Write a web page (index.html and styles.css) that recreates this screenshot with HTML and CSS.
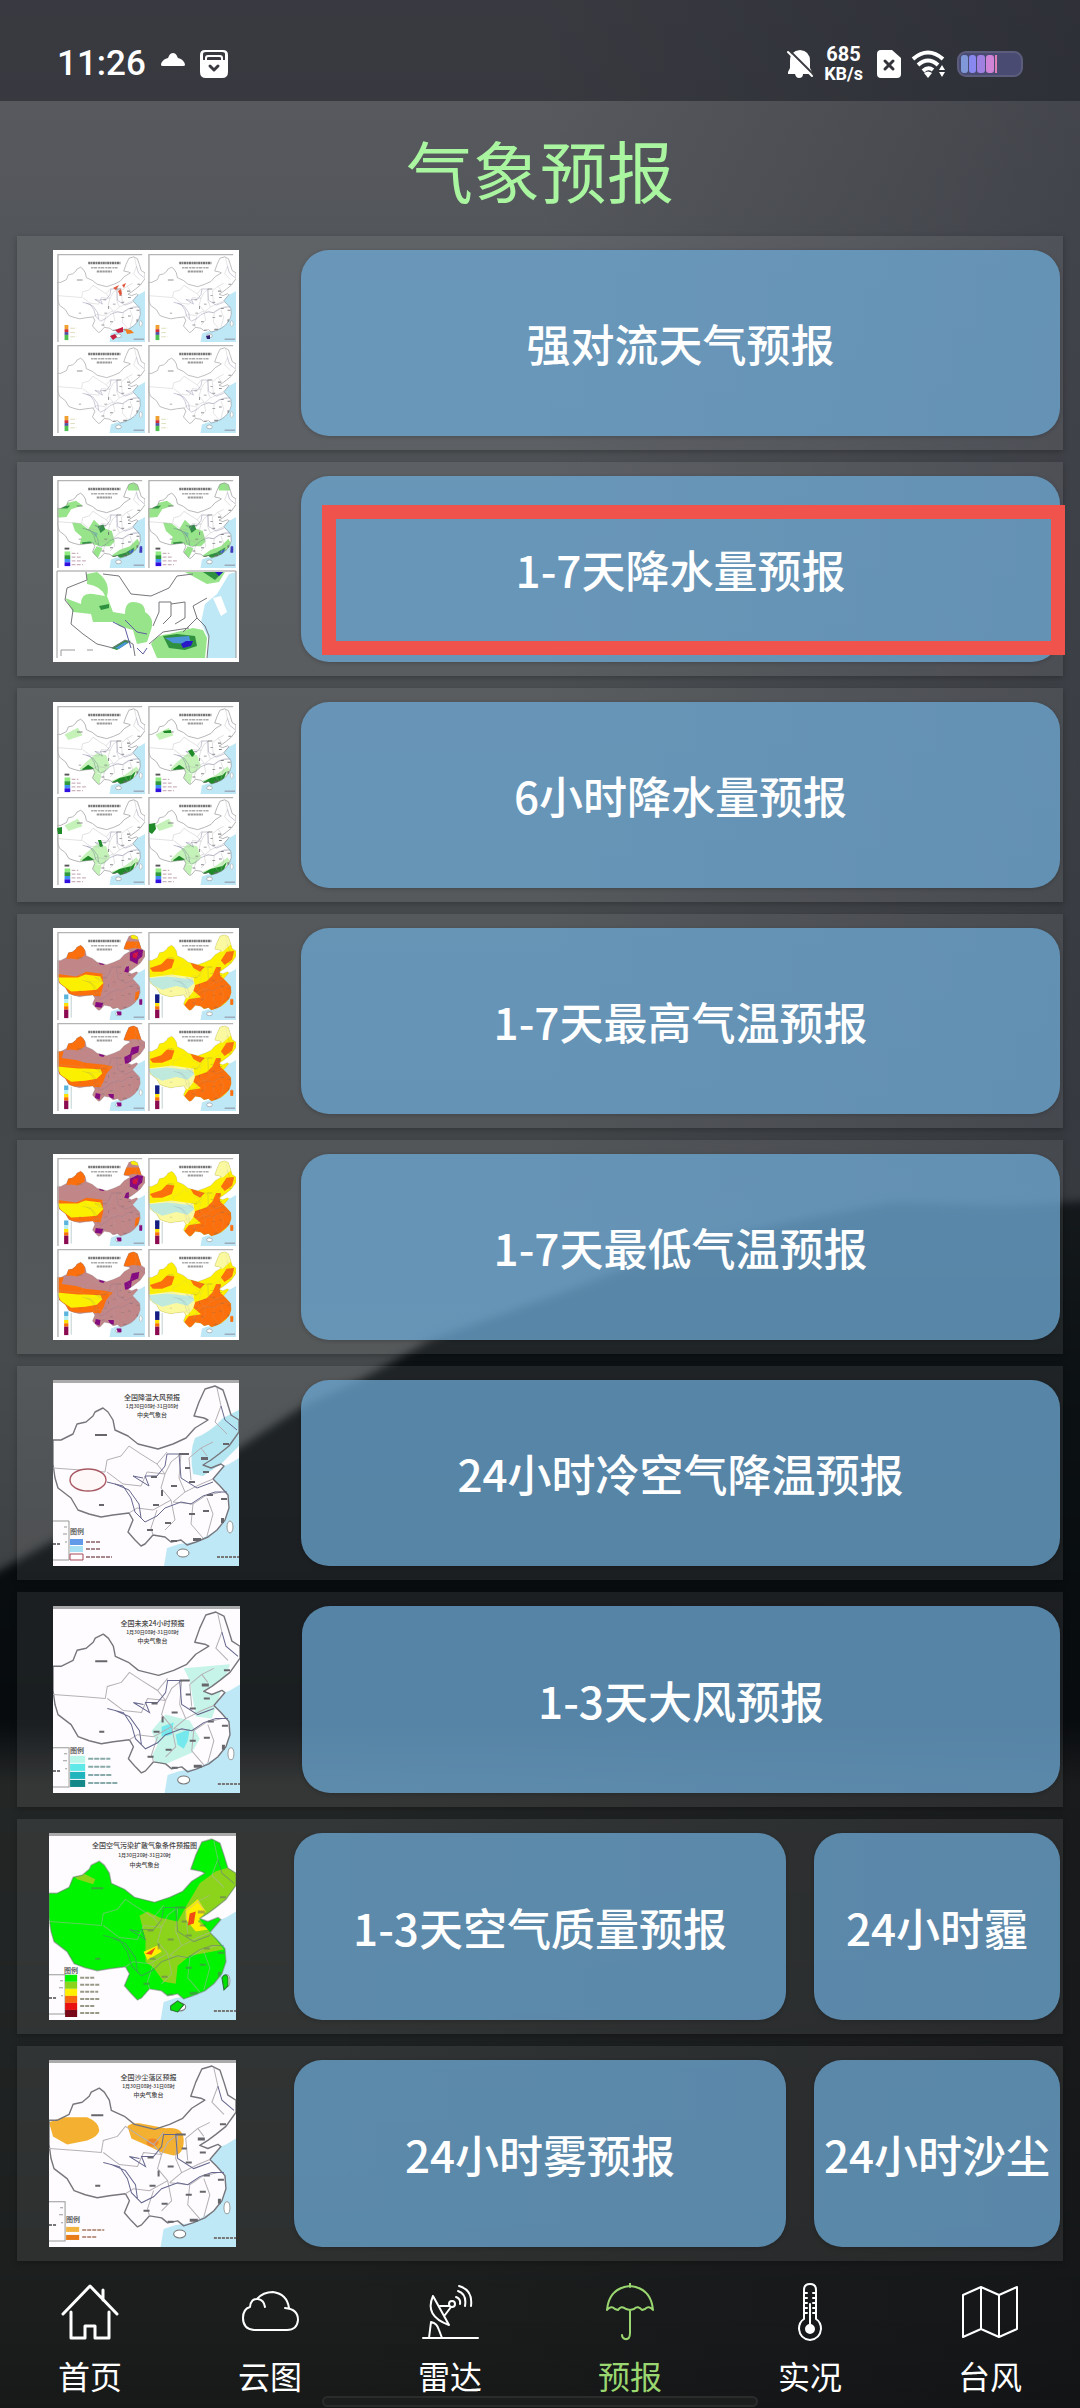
FILE: index.html
```html
<!DOCTYPE html>
<html lang="zh-CN">
<head>
    <meta charset="UTF-8">
    <meta name="viewport" content="width=device-width, initial-scale=1.0">
    <title>气象预报</title>
    <link rel="stylesheet" href="styles.css">
</head>
<body>
    <!-- mountain backdrop -->
    <svg class="backdrop" viewBox="0 0 1080 2408" preserveAspectRatio="none" aria-hidden="true">
        <defs>
            <linearGradient id="sky" x1="0" y1="0" x2="0" y2="1">
                <stop offset="0" stop-color="#5a5b60"/>
                <stop offset="0.1" stop-color="#53565a"/>
                <stop offset="0.3" stop-color="#4b4f52"/>
                <stop offset="0.46" stop-color="#43474a"/>
                <stop offset="0.56" stop-color="#484b4d"/>
                <stop offset="0.66" stop-color="#3e4143"/>
            </linearGradient>
            <linearGradient id="shade" x1="0" y1="0" x2="1" y2="0">
                <stop offset="0.5" stop-color="#1a1c28" stop-opacity="0"/>
                <stop offset="1" stop-color="#1a1c28" stop-opacity="0.32"/>
            </linearGradient>
            <linearGradient id="hill" x1="0" y1="0" x2="0" y2="1">
                <stop offset="0" stop-color="#15191c"/>
                <stop offset="0.15" stop-color="#0c1113"/>
                <stop offset="0.42" stop-color="#070b0e"/>
                <stop offset="0.47" stop-color="#242626"/>
                <stop offset="0.6" stop-color="#222525"/>
                <stop offset="0.9" stop-color="#1c1e1e"/>
                <stop offset="1" stop-color="#161818"/>
            </linearGradient>
            <linearGradient id="hill-shade" x1="0" y1="0" x2="1" y2="0">
                <stop offset="0.3" stop-color="#0b0d10" stop-opacity="0"/>
                <stop offset="1" stop-color="#0b0d10" stop-opacity="0.45"/>
            </linearGradient>
            <filter id="soft" color-interpolation-filters="sRGB"><feGaussianBlur stdDeviation="4"/></filter>
        </defs>
        <rect width="1080" height="2408" fill="url(#sky)"/>
        <rect width="1080" height="1400" fill="url(#shade)"/>
        <path fill="url(#hill)" filter="url(#soft)" d="M-20 1580 L0 1570 L53 1541 L150 1494 L239 1448 L300 1408 L360 1380 L430 1340 L572 1289 L689 1243 L790 1222 L895 1202 L1000 1206 L1100 1200 V2440 H-20 Z"/>
        <rect y="1600" width="1080" height="808" fill="url(#hill-shade)"/>
    </svg>

    <!-- shared map pieces -->
    <svg class="defs" width="0" height="0" aria-hidden="true">
        <defs>
            <path id="land" d="M0 60 L8 60 L20 54 L24 44 L33 42 L40 36 L42 32 L50 28 L55 32 L60 40 L62 50 L75 56 L85 64 L105 69 L120 64 L133 58 L142 48 L155 40 L151 38 L141 36 L146 22 L152 9 L162 6 L170 10 L174 22 L178 35 L186 40 V52 L176 66 L166 74 L158 80 L150 85 L158 88 L168 84 L171 86 L160 99 L167 106 L175 115 L176 128 L172 140 L164 150 L155 157 L143 162 L134 165 L128 160 L118 162 L112 157 L100 155 L92 164 L88 166 L82 160 L75 152 L80 140 L76 133 L60 135 L48 137 L36 134 L25 130 L18 118 L5 108 L2 98 L0 84 Z"/>
            <clipPath id="land-clip"><use href="#land"/></clipPath>
            <symbol id="sea" viewBox="0 0 186 186">
                <path fill="#bfe8f7" d="M186 78 L176 84 L171 86 L160 99 L167 106 L175 115 L176 128 L172 140 L164 150 L143 162 L126 164 L114 168 L111 186 H186 Z"/>
                <ellipse cx="130" cy="173" rx="6" ry="4" fill="#fff" stroke="#777"/>
                <ellipse cx="177" cy="147" rx="3" ry="6" fill="#fff" stroke="#999"/>
            </symbol>
            <symbol id="lines" viewBox="0 0 186 186">
                <use href="#land" fill="none" stroke="#76767c" stroke-width="1.4" stroke-linejoin="round"/>
                <g fill="none" stroke="#b5b0b5" stroke-width="1">
                    <path d="M0 88 L28 90 L52 92 L54 80 L68 76 L76 66 L88 74 L104 84 L112 94 M54 92 L70 104 L88 106 L94 92 L112 94 L118 82 L128 74 M128 74 L126 98 L132 112 L120 122 M112 94 L108 108 L118 120 L100 130 L84 128 L76 133 M120 122 L140 124 L152 116 L168 112 M104 130 L98 148 L100 155 M118 120 L122 140 L112 150 M140 124 L138 144 L150 158 M154 118 L160 134 L154 156 M132 112 L148 104 L160 99 M138 100 L136 78 L148 68 L160 62 M148 68 L154 76 M164 8 L168 26 L162 42 L174 54 M104 84 L114 72"/>
                </g>
                <g fill="none" stroke="#66688f" stroke-width="1">
                    <path d="M54 102 L70 106 L78 118 L82 132 L92 142 L104 136 L112 128 L128 122 L138 124 L150 116 L162 112 L174 112 M62 104 L76 110 L86 124 L88 138 M90 98 L80 96 L96 106 L92 96 L104 96 L112 86 L114 74 L126 74 L128 98 L144 108 L160 102 M168 26 L172 40 L184 50"/>
                </g>
                <g fill="#66666c">
                    <path d="M42 54h12v2h-12z M46 124h5v2h-5z M98 96h6v2h-6z M118 105h6v2h-6z M132 87h5v2h-5z M150 91h6v2h-6z M136 101h6v2h-6z M100 124h6v2h-6z M112 142h6v2h-6z M94 149h6v2h-6z M118 160h6v2h-6z M136 133h6v2h-6z M150 130h6v2h-6z M140 158h8v3h-8z M168 118h6v2h-6z M168 138h3v5h-3z M170 63h6v2h-6z M148 77h7v3h-7z M126 73h10v2h-10z M154 114h6v2h-6z M108 110h2v6h-2z"/>
                </g>
            </symbol>
            <symbol id="caption" viewBox="0 0 186 186">
                <path stroke="#777" stroke-width="5" stroke-dasharray="5 1 3 1" d="M66 19 H134"/>
                <path stroke="#aaa" stroke-width="3" stroke-dasharray="4 1 8 2" d="M72 29 H128"/>
                <path stroke="#999" stroke-width="4" stroke-dasharray="5 1" d="M84 37 H116"/>
                <path fill="none" stroke="#b4b4b4" stroke-width="3" d="M2 186 V1 H180"/>
                <path stroke="#889" stroke-width="2" d="M162 180 H184"/>
            </symbol>
            <symbol id="inset" viewBox="0 0 186 186">
                <path stroke="#aaa" stroke-width="4" d="M0 1 H186"/>
                <path fill="none" stroke="#999" stroke-width="1" d="M0 141 H16 V180 H0 M11 147h3 M10 154h4 M12 162h2"/>
                <path stroke="#777" stroke-width="2" stroke-dasharray="3 1" d="M0 164 H7 M164 177 H186"/>
            </symbol>
            <symbol id="scale-rain" viewBox="0 0 186 186">
                <path stroke="#555" stroke-width="4" d="M16 145h10"/>
                <path fill="#8eea80" d="M16 151h12v8h-12z"/>
                <path fill="#2e9a3c" d="M16 159h12v8h-12z"/>
                <path fill="#4090f0" d="M16 167h12v7h-12z"/>
                <path fill="#3010e0" d="M16 174h12v8h-12z"/>
                <path stroke="#b9a" stroke-width="2" stroke-dasharray="8 3" d="M31 155h14 M31 163h20 M31 171h30 M31 179h24"/>
            </symbol>
            <symbol id="scale-temp" viewBox="0 0 186 186">
                <path fill="#5ab4dc" d="M15 132h9v10h-9z"/>
                <path fill="#b8f0f0" d="M15 142h9v8h-9z"/>
                <path fill="#ffe000" d="M15 150h9v7h-9z"/>
                <path fill="#f87000" d="M15 157h9v7h-9z"/>
                <path fill="#8c0a50" d="M15 164h9v18h-9z"/>
                <path stroke="#bcc" stroke-width="2" d="M30 135v46"/>
            </symbol>
            <symbol id="scale-storm" viewBox="0 0 186 186">
                <path fill="#f0a030" d="M16 150h8v9h-8z"/>
                <path fill="#d03030" d="M16 159h8v6h-8z"/>
                <path fill="#5050a0" d="M16 165h8v6h-8z"/>
                <path fill="#50c050" d="M16 171h8v11h-8z"/>
                <path stroke="#ddb" stroke-width="2" stroke-dasharray="10 3" d="M28 157h14 M28 166h12 M28 175h14"/>
            </symbol>
            <symbol id="rain-area" viewBox="0 0 186 186">
                <g clip-path="url(#land-clip)">
                    <path fill="#98e48a" d="M0 54 L40 44 L54 54 L30 62 L20 78 L0 80 Z M146 6 L174 4 V22 L150 22 Z M32 90 L50 92 L66 104 L78 84 L94 100 L116 108 L122 130 L112 140 L92 140 L70 134 L48 136 L52 120 L38 108 Z M84 140 L96 144 L86 166 L72 158 Z M112 162 L132 148 L154 140 L170 124 L176 136 L160 158 L136 168 Z"/>
                    <path fill="#2f9140" d="M6 56 L28 54 L22 60 L8 60 Z M86 98 L98 94 L102 104 L92 112 Z M52 132 L70 130 L78 136 L58 140 Z M116 162 L144 154 L164 142 L156 158 L134 164 Z"/>
                    <path fill="#3c62c8" d="M150 152 L164 146 L158 156 Z"/>
                    <path fill="#7cc0a0" d="M74 108 L86 112 L84 122 Z"/>
                </g>
            </symbol>
            <symbol id="drizzle-area" viewBox="0 0 186 186">
                <g clip-path="url(#land-clip)">
                    <path fill="#c4f2b8" d="M16 60 L44 46 L54 62 L24 72 Z M62 118 L84 100 L104 104 L112 128 L98 142 L52 144 L48 132 Z M74 142 L94 144 L90 166 L74 160 Z M110 160 L140 148 L168 128 L174 136 L150 162 Z"/>
                    <path fill="#1f8a28" d="M52 134 L66 124 L78 132 L70 138 Z M114 162 L132 152 L158 146 L166 138 L160 156 L134 168 Z"/>
                </g>
            </symbol>
            <symbol id="heat-a" viewBox="0 0 186 186">
                <use href="#sea"/>
                <g clip-path="url(#land-clip)">
                    <path fill="#c08688" d="M0 0h186v186h-186z"/>
                    <path fill="#fb700c" d="M20 57 L24 40 L44 26 L60 30 L58 50 L44 58 L30 56 Z M0 88 L40 94 L62 84 L96 88 L98 112 L92 136 L60 134 L30 134 L0 106 Z M140 20 H186 V36 L160 34 L142 38 Z M166 128 L174 124 L172 140 L164 146 Z"/>
                    <path fill="#fbf000" d="M0 96 L44 96 L60 90 L92 94 L98 108 L84 122 L60 124 L30 126 L8 110 Z M152 0 H172 V16 L158 14 Z"/>
                    <path fill="#840c80" d="M154 44 L170 36 L182 38 L180 52 L172 58 L170 68 L154 60 Z M146 74 L152 72 L152 86 L142 84 Z M88 62 L102 66 L98 70 L90 68 Z M82 148 L98 150 L94 160 L80 158 Z"/>
                    <path fill="#d01040" d="M160 46 L172 42 L168 56 L160 54 Z"/>
                </g>
                <use href="#lines" opacity="0.35"/>
                <path fill="#840c80" d="M126 168h10v8h-8z M174 142h6v12h-6z"/>
                <use href="#caption"/>
                <use href="#scale-temp"/>
            </symbol>
            <symbol id="heat-c" viewBox="0 0 186 186">
                <use href="#sea"/>
                <g clip-path="url(#land-clip)">
                    <path fill="#c08688" d="M0 0h186v186h-186z"/>
                    <path fill="#fb700c" d="M20 57 L24 40 L44 26 L60 30 L58 50 L44 58 L30 56 Z M0 56 L14 60 L10 74 L40 78 L60 84 L100 88 L118 92 L104 108 L98 124 L92 136 L60 134 L30 134 L0 106 Z M140 0 H186 V36 L160 34 L142 38 Z"/>
                    <path fill="#fbf000" d="M0 92 L44 96 L60 96 L92 98 L96 106 L84 118 L60 122 L30 124 L8 110 Z"/>
                    <path fill="#840c80" d="M142 72 L154 66 L158 52 L174 48 L172 62 L158 68 L156 84 L144 86 Z M88 62 L102 66 L98 72 L90 70 Z M82 148 L92 150 L90 162 L80 158 Z M108 150 L120 150 L120 160 L112 158 Z"/>
                </g>
                <use href="#lines" opacity="0.35"/>
                <path fill="#840c80" d="M126 168h10v8h-8z"/>
                <use href="#caption"/>
                <use href="#scale-temp"/>
            </symbol>
            <symbol id="heat-b" viewBox="0 0 186 186">
                <use href="#sea"/>
                <g clip-path="url(#land-clip)">
                    <path fill="#fcf000" d="M0 0h186v186h-186z"/>
                    <path fill="#fbf9a0" d="M0 96 L50 90 L96 96 L100 120 L84 140 L40 138 L0 116 Z M140 0 H178 V24 L158 42 L138 38 Z"/>
                    <path fill="#bfe9dc" d="M0 98 L40 94 L92 100 L98 108 L84 120 L60 114 L30 122 L10 112 Z"/>
                    <path fill="#fb700c" d="M4 76 L28 68 L40 56 L56 58 L50 76 L30 84 L10 84 Z M88 62 L106 70 L120 74 L110 84 L96 76 Z M154 60 L166 42 L182 40 L178 58 L162 70 Z M100 112 L124 104 L136 92 L144 74 L154 74 L152 92 L166 104 L178 118 L174 140 L150 160 L130 168 L104 156 L88 168 L74 158 L86 142 L112 138 L96 124 Z"/>
                </g>
                <use href="#lines" opacity="0.3"/>
                <path fill="#fb700c" d="M174 142h6v12h-6z"/>
                <use href="#caption"/>
                <use href="#scale-temp"/>
                <path fill="#181c80" d="M15 132h9v18h-9z"/>
            </symbol>
            <symbol id="map-heat" viewBox="0 0 186 186">
                <rect width="186" height="186" fill="#fff"/>
                <use href="#heat-a" x="4" y="4" width="88" height="88"/>
                <use href="#heat-b" x="95" y="4" width="88" height="88"/>
                <use href="#heat-c" x="4" y="95" width="88" height="88"/>
                <use href="#heat-b" x="95" y="95" width="88" height="88"/>
            </symbol>
            <symbol id="storm-panel" viewBox="0 0 186 186">
                <use href="#sea"/>
                <use href="#lines" opacity="0.7"/>
                <use href="#caption"/>
                <use href="#scale-storm"/>
            </symbol>
            <symbol id="rain-panel" viewBox="0 0 186 186">
                <use href="#sea"/>
                <use href="#rain-area"/>
                <use href="#lines" opacity="0.8"/>
                <path fill="#403cc0" d="M175 140h5v14h-6z"/>
                <use href="#caption"/>
                <use href="#scale-rain"/>
            </symbol>
            <symbol id="drizzle-panel" viewBox="0 0 186 186">
                <use href="#sea"/>
                <use href="#drizzle-area"/>
                <use href="#lines" opacity="0.8"/>
                <use href="#caption"/>
                <use href="#scale-rain"/>
            </symbol>
        </defs>
    </svg>

    <div class="status-bar">
        <div class="status-left">
            <span class="clock">11:26</span>
            <svg class="ico-cloudlet" viewBox="0 0 24 16" aria-hidden="true">
                <path fill="#fff" d="M12 1 C15 1 16 4 17 6 C21 7 24 10 24 13 Q24 14 22 14 H2 Q0 14 0 13 C0 10 3 7 7 6 C8 4 9 1 12 1 Z"/>
            </svg>
            <svg class="ico-pocket" viewBox="0 0 28 28" aria-hidden="true">
                <path fill="#fff" fill-rule="evenodd" d="M5 0 H23 Q28 0 28 5 V22 Q28 28 22 28 H6 Q0 28 0 22 V5 Q0 0 5 0 Z M3 4 V10 H5 V8 Q5 5 8 5 H20 Q23 5 23 8 V10 H25 V4 Q25 2 22 2 H6 Q3 2 3 4 Z M7 10 H21 V8 Q21 7 19 7 H9 Q7 7 7 8 Z"/>
                <path fill="none" stroke="#3a3b40" stroke-width="3" stroke-linecap="round" stroke-linejoin="round" d="M10 16 L14 20 L18 16"/>
            </svg>
        </div>
        <div class="status-right">
            <svg class="ico-bell" viewBox="0 0 28 28" aria-hidden="true">
                <path fill="#fff" d="M14 0 Q24 1 24 11 V18 L26 22 V24 H17 Q17 28 13 28 Q10 28 9 24 H2 V22 L4 18 V11 Q4 1 14 0 Z"/>
                <path stroke="#3a3b40" stroke-width="2" d="M4 1 L28 25"/>
                <path stroke="#fff" stroke-width="2" stroke-linecap="round" d="M2 2 L26 26"/>
            </svg>
            <div class="net-speed"><span>685</span><span>KB/s</span></div>
            <svg class="ico-sim" viewBox="0 0 24 28" aria-hidden="true">
                <path fill="#fff" d="M4 0 H15 L24 8 V24 Q24 28 20 28 H4 Q0 28 0 24 V4 Q0 0 4 0 Z"/>
                <path stroke="#33353b" stroke-width="3" stroke-linecap="round" d="M8 11 L16 19 M16 11 L8 19"/>
            </svg>
            <svg class="ico-wifi" viewBox="0 0 36 28" aria-hidden="true">
                <g fill="none" stroke="#fff" stroke-width="4">
                    <path d="M2 9 Q17 -4 32 9"/>
                    <path d="M7 15 Q17 6 27 15"/>
                    <path d="M12 21 Q17 16 22 20"/>
                </g>
                <path fill="#fff" d="M13 23 Q17 20 21 23 L17 28 Z M28 20 L31 15 L34 20 Z M28 22 H34 L31 27 Z"/>
            </svg>
            <svg class="ico-battery" viewBox="0 0 66 26" aria-hidden="true">
                <rect x="1" y="1" width="64" height="24" rx="8" fill="#4a4b72" stroke="#5c5d7c" stroke-width="2"/>
                <rect x="4" y="4" width="7" height="18" rx="3" fill="#8098d8"/>
                <rect x="12" y="4" width="7" height="18" rx="3" fill="#8888f0"/>
                <rect x="20" y="4" width="8" height="18" rx="3" fill="#a080e0"/>
                <rect x="29" y="4" width="8" height="18" rx="3" fill="#d084d8"/>
                <rect x="38" y="4" width="2" height="18" fill="#e080b8"/>
            </svg>
        </div>
    </div>

    <header class="page-title">
        <h1>气象预报</h1>
    </header>

    <main class="forecast-list">
        <section class="card">
            <svg class="thumb" viewBox="0 0 186 186" role="img" aria-label="强对流">
                <rect width="186" height="186" fill="#fff"/>
                <use href="#storm-panel" x="4" y="4" width="88" height="88"/>
                <use href="#storm-panel" x="95" y="4" width="88" height="88"/>
                <use href="#storm-panel" x="4" y="95" width="88" height="88"/>
                <use href="#storm-panel" x="95" y="95" width="88" height="88"/>
                <path fill="#e0583c" d="M60 38 l6 -3 l-3 5 z M69 35 l4 -2 l-2 5 z M65 41 l3 -2 l1 5 l-2 2 z"/>
                <path fill="#c82040" d="M62 80 l8 -3 v5 l-5 1 z M57 86 l5 -2 l2 3 l-4 3 z"/>
                <path fill="#f08020" d="M72 79 l6 1 l3 3 l-7 1 z"/>
                <path fill="#302070" d="M153 86 l4 -1 v4 l-3 0 z"/>
            </svg>
            <button type="button" class="forecast-btn">强对流天气预报</button>
        </section>

        <section class="card highlighted">
            <svg class="thumb" viewBox="0 0 186 186" role="img" aria-label="降水量">
                <rect width="186" height="186" fill="#fff"/>
                <use href="#rain-panel" x="4" y="4" width="88" height="88"/>
                <use href="#rain-panel" x="95" y="4" width="88" height="88"/>
                <path fill="#98e48a" d="M34 98 L44 96 Q58 106 54 120 L60 136 L72 138 Q72 126 80 126 Q92 126 92 136 Q102 142 98 154 L94 166 L84 168 L80 154 L66 150 L62 146 L40 146 L38 138 L20 136 L12 122 L28 128 Q28 116 40 118 L52 120 Q48 110 34 108 Z M98 168 Q104 158 116 158 L140 152 L150 154 L154 162 L152 182 H104 Z M132 96 H172 L166 106 L154 108 Z"/>
                <path fill="#2f9140" d="M46 130 l10 -2 v4 l-8 2 z M110 160 L124 158 L142 160 L144 170 L132 174 L116 172 Z M150 96 h20 l-8 8 z M58 172 l14 -8 l6 1 l-14 9 z"/>
                <path fill="#4c94d8" d="M112 162 L136 160 L138 168 L120 167 Z M62 172 l10 -6 l3 1 l-9 6 z"/>
                <path fill="#2818c8" d="M128 168 l5 -3 h7 l-2 5 l-8 2 z M162 96 h8 l-4 4 z"/>
                <path fill="#bfe8f7" d="M183 96 V182 H154 L156 164 L148 146 L152 128 L164 118 L176 98 Z"/>
                <path fill="#fff" d="M160 122 L168 120 L174 136 L168 140 Z"/>
                <path fill="none" stroke="#76767c" stroke-width="1" d="M33 96 L34 104 L14 112 L12 124 L20 134 L18 148 L30 158 L44 168 L60 172 L72 164 L80 168 L82 180 M50 98 L66 100 L78 118 L98 120 L116 112 L124 100 L140 98 M106 126 h12 v14 l-8 8 M118 128 L132 126 V142 L122 148 M100 150 L106 136 L106 126 M130 156 L144 142 L152 150 L156 160 L154 182 M96 168 L110 156 L136 152 M144 142 L140 130 L154 122"/>
                <path fill="none" stroke="#5e5ea0" stroke-width="1" d="M60 146 L72 152 L78 172 M72 144 L84 156 L94 158 M84 172 L90 178 L94 172"/>
                <path fill="none" stroke="#999" stroke-width="1" d="M4 182 V95 H183 V182 M8 180 v-6 h14 M34 174 h6"/>
            </svg>
            <button type="button" class="forecast-btn">1-7天降水量预报</button>
        </section>

        <section class="card">
            <svg class="thumb" viewBox="0 0 186 186" role="img" aria-label="6小时降水量">
                <rect width="186" height="186" fill="#fff"/>
                <use href="#drizzle-panel" x="4" y="4" width="88" height="88"/>
                <use href="#drizzle-panel" x="95" y="4" width="88" height="88"/>
                <use href="#drizzle-panel" x="4" y="95" width="88" height="88"/>
                <use href="#drizzle-panel" x="95" y="95" width="88" height="88"/>
                <path fill="#1f8a28" d="M110 29 l8 -1 v3 h-7 z M135 49 l4 -2 l3 5 l-3 3 z M4 126 l5 -1 v7 l-4 0 z M96 122 l6 -1 l1 6 l-4 5 l-3 -2 z M45 138 l3 0 l2 6 l-3 1 z"/>
            </svg>
            <button type="button" class="forecast-btn">6小时降水量预报</button>
        </section>

        <section class="card">
            <svg class="thumb" role="img" aria-label="最高气温"><use href="#map-heat"/></svg>
            <button type="button" class="forecast-btn">1-7天最高气温预报</button>
        </section>

        <section class="card">
            <svg class="thumb" role="img" aria-label="最低气温"><use href="#map-heat"/></svg>
            <button type="button" class="forecast-btn">1-7天最低气温预报</button>
        </section>

        <section class="card">
            <svg class="thumb" viewBox="0 0 186 186" role="img" aria-label="冷空气降温">
                <rect width="186" height="186" fill="#fefcfe"/>
                <use href="#sea"/>
                <path fill="#b4e6f2" d="M186 30 L170 38 Q158 52 142 58 Q136 72 140 94 L150 96 L168 84 L186 66 Z"/>
                <use href="#lines"/>
                <ellipse cx="35" cy="100" rx="18" ry="11" fill="#fff8f8" stroke="#a85862" stroke-width="1.4"/>
                <use href="#inset"/>
                <text class="map-title" x="99" y="20">全国降温大风预报</text>
                <text class="map-date" x="99" y="28">1月30日08时-31日08时</text>
                <text class="map-org" x="99" y="37">中央气象台</text>
                <text class="map-legend" x="17" y="154">图例</text>
                <path fill="#609ae8" d="M17 159h13v6h-13z"/>
                <path fill="#a8e0f4" d="M17 166h13v6h-13z"/>
                <path fill="none" stroke="#a84a58" d="M17 174h13v6h-13z"/>
                <path stroke="#a8888c" stroke-width="2" stroke-dasharray="4 1" d="M33 162h15 M33 169h14 M33 177h26"/>
            </svg>
            <button type="button" class="forecast-btn">24小时冷空气降温预报</button>
        </section>

        <section class="card tall">
            <svg class="thumb" viewBox="0 0 186 186" role="img" aria-label="大风">
                <rect width="186" height="186" fill="#fefcfe"/>
                <use href="#sea"/>
                <g clip-path="url(#land-clip)">
                    <path fill="#c6f4e8" d="M130 62 L176 58 L170 76 L158 112 L142 110 L136 74 Z M98 124 L112 108 L136 114 L146 132 L138 146 L106 160 L98 150 L104 138 Z"/>
                    <path fill="#74e8ec" d="M108 120 L120 116 L118 128 L108 130 Z M122 128 L136 122 L134 134 L130 142 L124 138 Z"/>
                </g>
                <use href="#lines"/>
                <use href="#inset"/>
                <text class="map-title" x="99" y="20">全国未来24小时预报</text>
                <text class="map-date" x="99" y="28">1月30日08时-31日08时</text>
                <text class="map-org" x="99" y="37">中央气象台</text>
                <text class="map-legend" x="17" y="146">图例</text>
                <path fill="#baf6ea" d="M17 149h15v7h-15z"/>
                <path fill="#5ee8e8" d="M17 157h15v7h-15z"/>
                <path fill="#20b4bc" d="M17 165h15v7h-15z"/>
                <path fill="#148888" d="M17 173h15v7h-15z"/>
                <path stroke="#8aa" stroke-width="2" stroke-dasharray="5 1" d="M35 152h22 M35 160h22 M35 168h24 M35 176h30"/>
            </svg>
            <button type="button" class="forecast-btn">1-3天大风预报</button>
        </section>

        <section class="card tall split">
            <svg class="thumb" viewBox="0 0 186 186" role="img" aria-label="空气质量">
                <rect width="186" height="186" fill="#fefcfe"/>
                <use href="#sea"/>
                <g clip-path="url(#land-clip)">
                    <path fill="#00f400" d="M0 0h186v186h-186z"/>
                    <path fill="#8cd41c" d="M24 42 L34 40 L46 46 L44 51 L28 46 Z M90 82 L98 78 L110 84 L128 88 L138 70 L150 50 L166 38 L186 32 V60 L150 86 L174 116 L140 122 L128 132 L126 150 L114 148 L104 134 L96 128 L96 106 Z"/>
                    <path fill="#fff000" d="M136 76 L148 66 L156 78 L148 88 L158 96 L146 98 L136 86 Z M94 118 L108 112 L112 118 L98 126 Z"/>
                    <path fill="#f04c14" d="M140 80 L146 78 L144 90 L138 92 Z M96 120 L106 114 L102 121 Z"/>
                </g>
                <use href="#lines" opacity="0.5"/>
                <path fill="#00e000" stroke="#2a7030" d="M172 144 q4 -6 6 0 v8 l-4 4 z M121 172 l7 -5 l6 4 l-6 7 l-7 -2 z"/>
                <use href="#inset"/>
                <text class="map-title" x="95" y="15">全国空气污染扩散气象条件预报图</text>
                <text class="map-date" x="95" y="24">1月30日20时-31日20时</text>
                <text class="map-org" x="95" y="34">中央气象台</text>
                <text class="map-legend" x="15" y="139">图例</text>
                <path fill="#00f400" d="M16 141h12v7h-12z"/>
                <path fill="#8cd41c" d="M16 148h12v7h-12z"/>
                <path fill="#fff000" d="M16 155h12v7h-12z"/>
                <path fill="#f86810" d="M16 162h12v7h-12z"/>
                <path fill="#e81010" d="M16 169h12v7h-12z"/>
                <path fill="#780818" d="M16 176h12v7h-12z"/>
                <path stroke="#998" stroke-width="2" stroke-dasharray="4 1" d="M31 144h14 M31 151h20 M31 158h18 M31 165h20 M31 172h15 M31 179h20"/>
            </svg>
            <div class="btn-group">
                <button type="button" class="forecast-btn wide">1-3天空气质量预报</button>
                <button type="button" class="forecast-btn">24小时霾</button>
            </div>
        </section>

        <section class="card tall split">
            <svg class="thumb" viewBox="0 0 186 186" role="img" aria-label="沙尘">
                <rect width="186" height="186" fill="#fefcfe"/>
                <use href="#sea"/>
                <path fill="#f4b030" d="M0 62 L14 57 L38 57 Q50 62 50 70 Q49 76 38 80 L18 84 L4 76 Z M78 66 Q82 62 90 63 L116 68 Q134 66 134 80 Q134 94 124 95 L112 92 L100 86 L82 78 Z"/>
                <ellipse cx="103" cy="82" rx="6" ry="4" fill="#f08828"/>
                <use href="#lines"/>
                <use href="#inset"/>
                <text class="map-title" x="99" y="20">全国沙尘落区预报</text>
                <text class="map-date" x="99" y="28">1月30日08时-31日08时</text>
                <text class="map-org" x="99" y="37">中央气象台</text>
                <text class="map-legend" x="17" y="161">图例</text>
                <path fill="#f4b440" d="M17 166h13v5h-13z"/>
                <path fill="#e87c18" d="M17 174h13v5h-13z"/>
                <path stroke="#b98" stroke-width="2" stroke-dasharray="4 1" d="M33 169h22 M33 176h14"/>
            </svg>
            <div class="btn-group">
                <button type="button" class="forecast-btn wide">24小时雾预报</button>
                <button type="button" class="forecast-btn">24小时沙尘</button>
            </div>
        </section>
    </main>

    <nav class="tab-bar">
        <a class="tab" href="#home">
            <svg viewBox="0 0 58 58" stroke-width="3" aria-hidden="true">
                <path d="M2 31 L29 3 L56 31 M10 29 V55 H24 V43 H34 V55 H48 V29 M42 17 V7"/>
            </svg>
            <span>首页</span>
        </a>
        <a class="tab" href="#cloud">
            <svg viewBox="0 0 58 58" stroke-width="2" aria-hidden="true">
                <path d="M44 25 Q57 26 57 37 Q56 47 46 47 H13 Q2 46 2 35 Q2 26 9 24 Q10 15 17 16 Q23 17 24 24 M16 16 Q22 9 32 9 Q46 11 48 25"/>
            </svg>
            <span>云图</span>
        </a>
        <a class="tab" href="#radar">
            <svg viewBox="0 0 58 58" stroke-width="2" aria-hidden="true">
                <path d="M12 13 Q3 33 28 42 Z M19 23 L28 23 M24 32 L30 24 M2 55 H57 M8 55 L10 39 Q16 40 18 47 L21 55 M35 14 Q40 16 39 21 M37 8 Q46 11 44 23 M38 3 Q52 7 50 23"/>
                <circle cx="31" cy="21" r="3"/>
            </svg>
            <span>雷达</span>
        </a>
        <a class="tab active" href="#forecast">
            <svg viewBox="0 0 58 58" stroke-width="2" aria-hidden="true">
                <path d="M29 0 V4 M6 27 Q8 5 29 3 Q50 5 52 27 Q48 22 44 26 L41 27 Q37 22 33 26 L29 27 L25 26 Q20 22 17 27 L14 26 Q10 22 6 27 M29 27 V50 Q29 57 24 56 Q21 55 21 52"/>
            </svg>
            <span>预报</span>
        </a>
        <a class="tab" href="#live">
            <svg viewBox="0 0 58 58" stroke-width="2" aria-hidden="true">
                <path d="M23 36 V7 Q23 1 29 1 Q35 1 35 7 V36 Q40 39 40 46 Q39 56 29 57 Q19 56 18 46 Q18 39 23 36 M29 21 V45 M23 10 H26 M23 15 H26 M23 20 H26 M23 25 H26 M23 30 H26 M32 10 H35 M32 15 H35 M32 20 H35 M32 25 H35 M32 30 H35"/>
                <circle cx="29" cy="46" r="4" fill="currentColor"/>
            </svg>
            <span>实况</span>
        </a>
        <a class="tab" href="#typhoon">
            <svg viewBox="0 0 58 58" stroke-width="2" aria-hidden="true">
                <path d="M2 12 L20 4 L38 12 L56 4 V46 L38 54 L20 46 L2 54 Z M20 4 V46 M38 12 V54"/>
            </svg>
            <span>台风</span>
        </a>
        <div class="home-indicator"></div>
    </nav>
</body>
</html>
```

FILE: styles.css
```css
*,
*::after {
    box-sizing: border-box;
}
body {
    margin: 0;
    min-height: 100vh;
    position: relative;
    background: #1a1c1c;
    color: #fff;
    font-family: "Noto Sans CJK SC", "Noto Sans", sans-serif;
}
.backdrop {
    position: absolute;
    top: 0;
    left: 0;
    width: 100%;
    height: 100%;
    z-index: -1;
}
.defs {
    position: absolute;
}

/* status bar */
.status-bar {
    display: flex;
    justify-content: space-between;
    align-items: center;
    height: 101px;
    padding: 27px 57px 0;
    background: rgba(24, 26, 34, 0.5);
}
.status-left,
.status-right {
    display: flex;
    align-items: center;
}
.status-left {
    gap: 15px;
}
.status-right {
    gap: 10px;
}
.clock {
    font-family: Roboto, sans-serif;
    font-size: 35px;
    font-weight: 500;
    line-height: 40px;
}
.ico-cloudlet {
    width: 24px;
    height: 16px;
    margin-bottom: 8px;
}
.ico-pocket,
.ico-bell {
    width: 28px;
    height: 28px;
}
.ico-sim {
    width: 24px;
    height: 28px;
    margin-left: 4px;
}
.ico-wifi {
    width: 36px;
    height: 28px;
}
.ico-battery {
    width: 66px;
    height: 26px;
}
.net-speed {
    display: flex;
    flex-direction: column;
    align-items: center;
    font-family: Roboto, sans-serif;
    font-size: 20px;
    font-weight: 700;
    line-height: 20px;
}
.net-speed span:last-child {
    font-size: 18px;
}

/* title */
.page-title {
    display: flex;
    justify-content: center;
    align-items: center;
    height: 135px;
}
.page-title h1 {
    margin: 0;
    color: #a9f5a0;
    font-size: 67px;
    font-weight: 400;
    line-height: 80px;
}

/* forecast cards */
.forecast-list {
    display: flex;
    flex-direction: column;
    gap: 12px;
    margin: 0 17px;
}
.card {
    display: flex;
    align-items: center;
    gap: 62px;
    padding: 14px 3px 14px 36px;
    background: rgba(255, 255, 255, 0.08);
    box-shadow: 0 2px 6px rgba(0, 0, 0, 0.25);
}
.card.split {
    gap: 58px;
    padding-left: 32px;
}
.thumb {
    flex: none;
    width: 186px;
    height: 186px;
}
.tall .thumb {
    width: 187px;
    height: 187px;
}
.btn-group {
    flex: 1;
    display: grid;
    grid-template-columns: 2fr 1fr;
    gap: 28px;
}
.forecast-btn {
    flex: 1;
    height: 186px;
    padding: 0;
    border: none;
    border-radius: 28px;
    background: rgba(110, 172, 218, 0.72);
    box-shadow: 0 1px 4px rgba(0, 0, 0, 0.2);
    color: #fff;
    font-family: inherit;
    font-size: 44px;
    font-weight: 500;
    line-height: 60px;
    white-space: nowrap;
    cursor: pointer;
}
.tall .forecast-btn {
    height: 187px;
}
.highlighted {
    position: relative;
}
.highlighted::after {
    content: "";
    position: absolute;
    top: 43px;
    right: -2px;
    left: 305px;
    height: 150px;
    border: 14px solid #ef534b;
    pointer-events: none;
}
.map-title,
.map-date,
.map-org {
    fill: #444;
    text-anchor: middle;
    font-size: 7px;
    font-weight: 500;
}
.map-date {
    font-size: 5px;
}
.map-org {
    font-size: 6px;
}
.map-legend {
    fill: #444;
    font-size: 7px;
    font-weight: 500;
}

/* bottom tabs */
.tab-bar {
    position: relative;
    display: grid;
    grid-template-columns: repeat(6, 1fr);
    height: 147px;
    padding-top: 22px;
}
.tab {
    display: flex;
    flex-direction: column;
    align-items: center;
    gap: 10px;
    color: #fff;
    text-decoration: none;
    font-size: 32px;
    line-height: 48px;
}
.tab.active {
    color: #9bd770;
}
.tab svg {
    width: 58px;
    height: 58px;
    fill: none;
    stroke: currentColor;
    stroke-linecap: round;
    stroke-linejoin: round;
}
.home-indicator {
    position: absolute;
    bottom: 1px;
    left: 50%;
    width: 436px;
    height: 11px;
    margin-left: -218px;
    border: 2px solid #2a2c2c;
    border-radius: 6px;
    background: #1c1e1e;
}
```
